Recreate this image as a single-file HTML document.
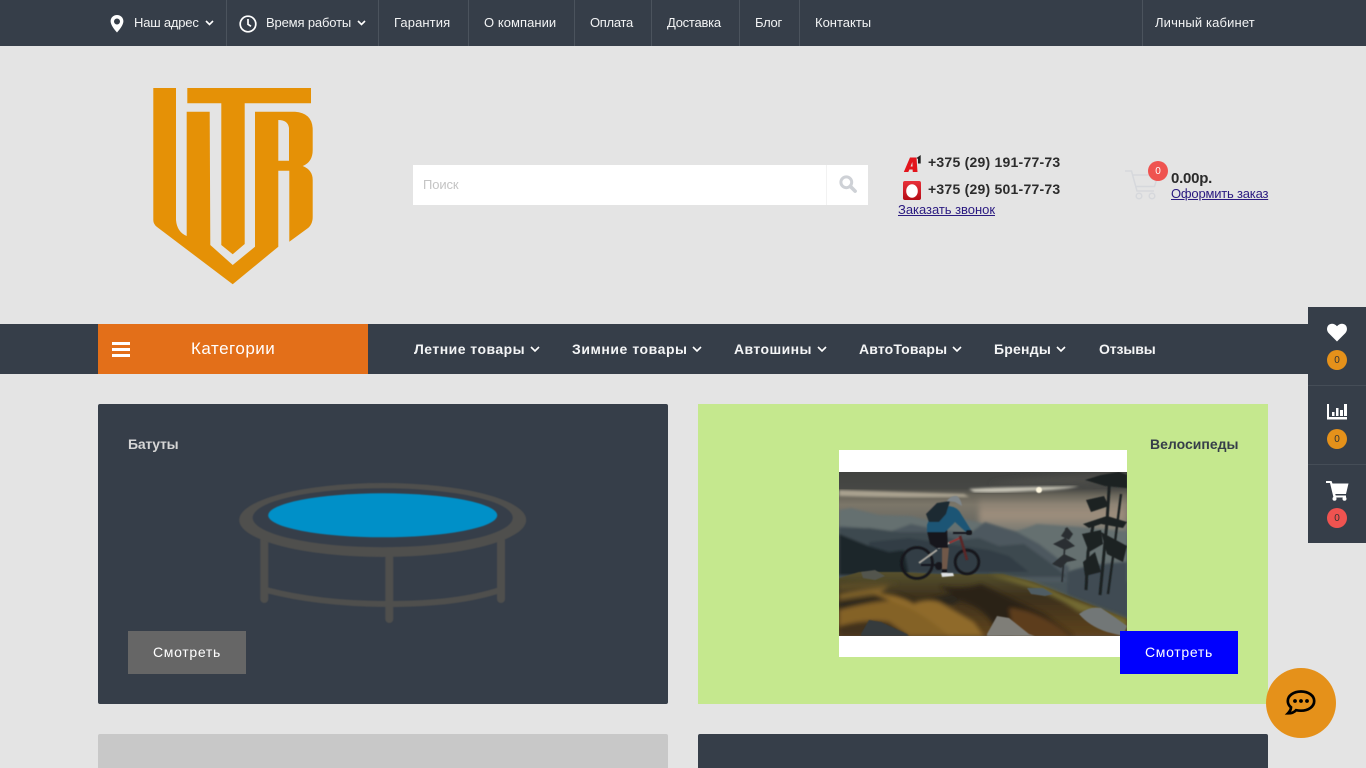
<!DOCTYPE html>
<html lang="ru">
<head>
<meta charset="utf-8">
<title>UTR</title>
<style>
html,body{margin:0;padding:0;width:1366px;height:768px;overflow:hidden;background:#e4e4e4}
body{position:relative;font-family:"Liberation Sans","Noto Sans CJK SC",sans-serif;color:#fff}
.b{position:absolute}
.t{position:absolute;line-height:20px;white-space:nowrap}
.top{font-size:13px;color:#f2f3f4;top:13px}
.sep{position:absolute;top:0;width:1px;height:46px;background:#4b535d}
.menu{font-size:14px;font-weight:700;top:339px;color:#f4f5f6}
svg{position:absolute;overflow:visible}
.chev{fill:none;stroke:currentColor;stroke-width:1.6}
.badge{position:absolute;width:20px;height:20px;border-radius:50%;font-size:10px;line-height:22px;text-align:center;color:#333}
a{color:#2a1a80;text-decoration:underline}
</style>
</head>
<body>
<!-- top bar -->
<div class="b" style="left:0;top:0;width:1366px;height:46px;background:#363e49"></div>
<div class="sep" style="left:226px"></div><div class="sep" style="left:378px"></div><div class="sep" style="left:468px"></div><div class="sep" style="left:574px"></div><div class="sep" style="left:651px"></div><div class="sep" style="left:739px"></div><div class="sep" style="left:799px"></div><div class="sep" style="left:1142px"></div>
<svg style="left:110px;top:15px" width="14" height="18" viewBox="0 0 14 18"><path fill="#fff" fill-rule="evenodd" d="M7 0C3.200 0 .6 2.800.6 6.300.6 10 4.600 14.800 7 17.500 9.400 14.800 13.400 10 13.400 6.300 13.400 2.800 10.800 0 7 0ZM7 3.500A3 3 0 1 1 7 9.500 3 3 0 0 1 7 3.500Z"/></svg>
<span class="t top" style="left:134px;letter-spacing:-.2px">Наш адрес</span>
<svg style="left:205px;top:20px;color:#fff" width="9" height="6"><path class="chev" d="M1 1l3.500 3.500L8 1"/></svg>
<svg style="left:239px;top:15px" width="18" height="18" viewBox="0 0 18 18"><circle cx="9" cy="9" r="7.800" fill="none" stroke="#fff" stroke-width="1.700"/><path d="M9 4v5.300l3 2" fill="none" stroke="#fff" stroke-width="1.700"/></svg>
<span class="t top" style="left:266px;letter-spacing:-.15px">Время работы</span>
<svg style="left:357px;top:20px;color:#fff" width="9" height="6"><path class="chev" d="M1 1l3.500 3.500L8 1"/></svg>
<span class="t top" style="left:394px;letter-spacing:.1px">Гарантия</span>
<span class="t top" style="left:484px;letter-spacing:.05px">О компании</span>
<span class="t top" style="left:590px;letter-spacing:-.3px">Оплата</span>
<span class="t top" style="left:667px;letter-spacing:-.25px">Доставка</span>
<span class="t top" style="left:755px;letter-spacing:-.3px">Блог</span>
<span class="t top" style="left:815px">Контакты</span>
<span class="t top" style="left:1155px;letter-spacing:.15px">Личный кабинет</span>

<!-- logo -->
<svg style="left:0;top:0" width="400" height="300" viewBox="0 0 400 300"><path fill="#e59106" fill-rule="evenodd" d="M153.300 88H176V220Q177 232 186.700 236V111.700H209.700L210.300 245 232.700 265 255 246.700V111.700H295Q312.700 113 312.700 130V150Q312.700 162 302.700 166 312.700 170 312.700 180V216.700Q312.700 225 306.700 229L289.300 241.700V170.700H278.300V246.700L232.700 284.300 156.700 226.700Q153.300 224 153.300 220ZM278.300 120V160.700H289V128Q288 120 278.300 120Z"/><path fill="#e59106" d="M187.300 88H311V103.300H244.700V244L232.700 254.300 221.300 245V103.300H187.300Z"/></svg>

<!-- search -->
<div class="b" style="left:413px;top:165px;width:455px;height:40px;background:#fff"></div>
<div class="b" style="left:826px;top:165px;width:1px;height:40px;background:#f2f2f2"></div>
<span class="t" style="left:423px;top:175px;font-size:13px;color:#c4c4c4;letter-spacing:-.1px">Поиск</span>
<svg style="left:839px;top:175px" width="18" height="18" viewBox="0 0 18 18"><circle cx="7.300" cy="7.300" r="5.400" fill="none" stroke="#ced1d6" stroke-width="3"/><path d="M11.300 11.300l4.800 4.800" stroke="#ced1d6" stroke-width="3.600" stroke-linecap="round"/></svg>

<!-- phones -->
<svg style="left:903px;top:154px" width="19" height="19" viewBox="0 0 19 19"><path fill="#e3141c" fill-rule="evenodd" d="M.8 18L7 3.500h6.500L14.500 18H9.800L9.600 15.500H6.400L5.300 18ZM7.600 12.500h2L9.300 8Z"/><path fill="#222" d="M13.500 4L17.700 1V9.500H15V5Z"/></svg>
<span class="t" style="left:928px;top:152px;font-size:14px;font-weight:700;color:#2b2b2b;letter-spacing:.23px">+375 (29) 191-77-73</span>
<svg style="left:903px;top:181px" width="18" height="19" viewBox="0 0 18 19"><defs><linearGradient id="mts" x1="0" y1="0" x2="0" y2="1"><stop offset="0" stop-color="#e8313a"/><stop offset="1" stop-color="#b50c15"/></linearGradient></defs><rect width="18" height="19" rx="2" fill="url(#mts)"/><ellipse cx="9" cy="10" rx="5.800" ry="6.800" fill="#fff"/></svg>
<span class="t" style="left:928px;top:179px;font-size:14px;font-weight:700;color:#2b2b2b;letter-spacing:.23px">+375 (29) 501-77-73</span>
<a class="t" href="#" style="left:898px;top:200px;font-size:13px;letter-spacing:-.03px">Заказать звонок</a>

<!-- header cart -->
<svg style="left:1125px;top:170px" width="34" height="30" viewBox="0 0 34 30"><path d="M0 1H6.500L12 21H29" fill="none" stroke="#d6d8dc" stroke-width="1.500"/><path d="M7.500 5H33L29.500 16.500H11" fill="none" stroke="#d6d8dc" stroke-width="1.500"/><circle cx="14" cy="26" r="2.800" fill="none" stroke="#d6d8dc" stroke-width="1.500"/><circle cx="27" cy="26" r="2.800" fill="none" stroke="#d6d8dc" stroke-width="1.500"/></svg>
<div class="badge" style="left:1148px;top:161px;background:#ef5350;color:#fff">0</div>
<span class="t" style="left:1171px;top:169px;font-size:15px;font-weight:700;color:#2b2b2b;letter-spacing:-.25px">0.00р.</span>
<a class="t" href="#" style="left:1171px;top:184px;font-size:13px;letter-spacing:-.2px">Оформить заказ</a>

<!-- menu bar -->
<div class="b" style="left:0;top:324px;width:1366px;height:50px;background:#363e49"></div>
<div class="b" style="left:98px;top:324px;width:270px;height:50px;background:#e36f19"></div>
<div class="b" style="left:112px;top:342px;width:18px;height:3px;background:#fff"></div>
<div class="b" style="left:112px;top:348px;width:18px;height:3px;background:#fff"></div>
<div class="b" style="left:112px;top:354px;width:18px;height:3px;background:#fff"></div>
<span class="t" style="left:191px;top:339px;font-size:17px;color:#fff;letter-spacing:.5px">Категории</span>
<span class="t menu" style="left:414px;letter-spacing:.47px">Летние товары</span>
<svg style="left:530px;top:346px;color:#fff" width="10" height="7"><path class="chev" d="M1 1l4 4 4-4"/></svg>
<span class="t menu" style="left:572px;letter-spacing:.55px">Зимние товары</span>
<svg style="left:692px;top:346px;color:#fff" width="10" height="7"><path class="chev" d="M1 1l4 4 4-4"/></svg>
<span class="t menu" style="left:734px;letter-spacing:.43px">Автошины</span>
<svg style="left:817px;top:346px;color:#fff" width="10" height="7"><path class="chev" d="M1 1l4 4 4-4"/></svg>
<span class="t menu" style="left:859px;letter-spacing:.15px">АвтоТовары</span>
<svg style="left:952px;top:346px;color:#fff" width="10" height="7"><path class="chev" d="M1 1l4 4 4-4"/></svg>
<span class="t menu" style="left:994px;letter-spacing:.22px">Бренды</span>
<svg style="left:1056px;top:346px;color:#fff" width="10" height="7"><path class="chev" d="M1 1l4 4 4-4"/></svg>
<span class="t menu" style="left:1099px;letter-spacing:-.1px">Отзывы</span>

<!-- cards -->
<div class="b" style="left:98px;top:404px;width:570px;height:300px;background:#363e49;border-radius:2px"></div>
<div class="b" style="left:698px;top:404px;width:570px;height:300px;background:#c5e88e"></div>
<div class="b" style="left:98px;top:734px;width:570px;height:34px;background:#c8c8c8;border-radius:2px 2px 0 0"></div>
<div class="b" style="left:698px;top:734px;width:570px;height:34px;background:#363e49;border-radius:2px 2px 0 0"></div>
<span class="t" style="left:128px;top:434px;font-size:14px;font-weight:700;color:#d6d6d6;letter-spacing:-.25px">Батуты</span>
<span class="t" style="left:1150px;top:434px;font-size:14px;font-weight:700;color:#363e49;letter-spacing:0">Велосипеды</span>

<!-- trampoline -->
<svg style="left:0;top:0;filter:blur(.4px)" width="668" height="640" viewBox="0 0 668 640" fill="none">
<path d="M264.300 540V599M501 540V599M389.300 558V619" stroke="#4f4f4d" stroke-width="8" stroke-linecap="round"/>
<path d="M266 590Q320 604 389 604T500 590" stroke="#4f4f4d" stroke-width="6"/>
<ellipse cx="382.700" cy="520" rx="143.500" ry="37" fill="#4f4f4d"/>
<ellipse cx="382.700" cy="517.700" rx="130" ry="29.500" fill="#363e49"/>
<ellipse cx="382.700" cy="515.300" rx="114.500" ry="22" fill="#0090c8"/>
</svg>
<div class="b" style="left:128px;top:631px;width:118px;height:43px;background:#666;line-height:43px;text-align:center;font-size:14px;letter-spacing:.7px;color:#fff">Смотреть</div>

<!-- bike photo -->
<div class="b" style="left:839px;top:450px;width:288px;height:207px;background:#fff"></div>
<svg style="left:839px;top:472px;overflow:hidden" width="288" height="164" viewBox="0 0 288 164">
<defs>
<linearGradient id="sky" x1="0" y1="0" x2="0" y2="1"><stop offset="0" stop-color="#414240"/><stop offset=".1" stop-color="#464744"/><stop offset=".14" stop-color="#676459"/><stop offset=".2" stop-color="#7c7669"/><stop offset=".28" stop-color="#6f6d64"/><stop offset=".38" stop-color="#5c6568"/><stop offset=".6" stop-color="#475358"/></linearGradient>
<linearGradient id="haze" x1="0" y1="0" x2="0" y2="1"><stop offset="0" stop-color="#a59786" stop-opacity="0"/><stop offset=".5" stop-color="#a08f7d"/><stop offset="1" stop-color="#808279" stop-opacity=".6"/></linearGradient>
<linearGradient id="hl" x1="0" y1="0" x2="0" y2="1"><stop offset="0" stop-color="#56512e"/><stop offset=".4" stop-color="#3d301c"/><stop offset="1" stop-color="#5f4420"/></linearGradient>
<filter id="s1" x="-10%" y="-10%" width="120%" height="120%"><feGaussianBlur stdDeviation="1.200"/></filter>
<filter id="s3" x="-10%" y="-10%" width="120%" height="120%"><feGaussianBlur stdDeviation="2"/></filter>
<filter id="s2" x="-20%" y="-60%" width="140%" height="220%"><feGaussianBlur stdDeviation="3"/></filter>
<filter id="s0" x="-10%" y="-10%" width="120%" height="120%"><feGaussianBlur stdDeviation=".6"/></filter>
</defs>
<rect width="288" height="164" fill="url(#sky)"/>
<!-- sky -->
<path d="M140 24H288V62H140Z" fill="url(#haze)" filter="url(#s2)"/>
<path d="M0 18Q60 20 125 22L130 25Q60 26 0 24Z" fill="#a9a18f" filter="url(#s1)"/>
<path d="M130 17Q180 14 240 14 225 18 190 19 160 21 135 20Z" fill="#c9c6b8" filter="url(#s1)"/>
<path d="M150 12Q220 0 288 4V8Q240 14 150 12Z" fill="#4e4e4a" filter="url(#s2)"/>
<circle cx="200" cy="18" r="3" fill="#fff8e0" filter="url(#s0)"/>
<!-- mountains -->
<g filter="url(#s1)">
<path d="M0 38L12 36 40 43 72 44 88 48 130 48 176 60 198 52 240 55 288 60V110H0Z" fill="#656f70"/>
<path d="M0 54L25 56 50 60 72 52 100 58 130 62 146 50 178 60 200 72 230 95V110H0Z" fill="#4d595e"/>
<path d="M0 56L30 56 60 60 85 60 120 68 140 66 160 74 185 72 210 90 228 105H0Z" fill="#3c484f"/>
<path d="M30 70L70 66 110 72 150 78 170 84 190 100H30Z" fill="#323e45"/>
<path d="M0 62L30 74 50 80 65 78 70 103H0Z" fill="#1e272c"/>
</g>
<path d="M228 100Q250 92 288 90V150L228 123Z" fill="#3f4c52" filter="url(#s1)"/>
<!-- trees -->
<g filter="url(#s0)" fill="#1c2123">
<g fill="none" stroke="#1c2123"><path d="M271 2L268 50 261 123" stroke-width="3"/><path d="M282 22L276 70 269 122" stroke-width="2.400"/><path d="M254 54L249 80 247 118" stroke-width="3"/><path d="M227 56L225 85 223 110" stroke-width="1.600" stroke="#262b2d"/></g>
<path d="M246 8L262 3 280 0 288 3V16L266 14Z"/>
<path d="M247 28L265 24 270 34 252 40Z"/>
<path d="M244 52L268 44 288 50 284 56 262 52 250 56Z"/>
<path d="M243 62L262 58 264 72 250 80Z"/>
<path d="M262 60L288 74 284 90 268 82Z"/>
<path d="M244 90L256 80 262 100 246 104Z"/>
<path d="M228 55L234 62 230 68 222 64Z" fill="#2a2f30"/>
<path d="M214 72L226 66 236 74 226 78Z" fill="#2a2f30"/>
<path d="M213 92L225 82 238 88 228 90 222 96Z" fill="#2a2f30"/>
</g>
<!-- hill -->
<path d="M0 106L20 100 62 100 100 102 144 102 164 102 194 110 227 123 288 147V164H0Z" fill="url(#hl)" filter="url(#s0)"/>
<g filter="url(#s3)">
<path d="M150 102Q190 106 226 124L288 147V158Q270 142 240 140 215 122 180 112Z" fill="#736b30"/>
<path d="M0 112Q40 108 60 112 30 114 0 118Z" fill="#5c4d26"/>
<path d="M0 122Q25 116 50 114L40 122 0 128Z" fill="#7a5f29"/>
<path d="M0 130L60 122 80 130 110 122 130 125 110 134 40 128 0 140Z" fill="#29251a"/>
<path d="M0 138Q30 130 55 128 78 136 100 150L130 164H0Z" fill="#846227"/>
<path d="M30 120Q60 122 75 132 85 126 100 130 115 138 135 150L145 164H110Q90 146 70 136 50 128 30 120Z" fill="#8f6a2b"/>
<path d="M100 114Q125 118 142 112 175 128 205 142L235 164H160Q150 138 125 130Z" fill="#2b2217"/>
<path d="M170 136Q200 138 232 164H175Z" fill="#5d3e1a"/>
<path d="M0 154Q30 146 50 150L70 164H0Z" fill="#43321c"/>
</g>
<!-- rocks -->
<g filter="url(#s0)">
<path d="M148 162L158 144 170 146 190 162 196 164H148Z" fill="#7f7e78"/>
<path d="M240 142Q250 134 262 136 280 148 288 154L284 164 268 160Q250 154 240 142Z" fill="#727777"/>
<path d="M188 116L204 116 214 122 206 124 192 122Z" fill="#505d63"/>
<path d="M22 162L30 148 42 150 68 162 70 164H22Z" fill="#353b3e"/>
<path d="M22 100L36 98 46 104 36 108 24 106Z" fill="#52554d"/>
</g>
<!-- bike -->
<g fill="none" filter="url(#s0)">
<circle cx="78" cy="91" r="15.500" stroke="#15191a" stroke-width="2.800"/>
<circle cx="128" cy="90" r="11.800" stroke="#15191a" stroke-width="2.800"/>
<path d="M80 91L98 78" stroke="#a9a59d" stroke-width="2"/>
<path d="M82 93L102 93" stroke="#15191a" stroke-width="2"/>
<path d="M99 76L121 66" stroke="#b9b5ad" stroke-width="2"/>
<path d="M110 71L121 66" stroke="#8f2f2d" stroke-width="2"/>
<path d="M121 64L128 88" stroke="#5a2525" stroke-width="2.600"/>
<path d="M114 61H132" stroke="#15191a" stroke-width="2"/>
<circle cx="100" cy="94" r="4" fill="#15191a"/>
</g>
<g filter="url(#s0)">
<path d="M103 76H110L108 97H103Z" fill="#6f5849"/>
<path d="M103 97H108V101H103Z" fill="#15181b"/>
<path d="M102 101H114L115 104 103 105Z" fill="#dfe2e4"/>
<path d="M88 59L108 56 109 76 97 76 91 72Z" fill="#15181b"/>
<path d="M88 53Q92 40 108 34 118 34 122 42L132 58 128 61 116 50 110 56 106 60 88 60Z" fill="#1b5575"/>
<path d="M87 42L98 31 111 29 107 42 100 50 90 50Z" fill="#1e2a30"/>
<path d="M108 29Q112 23 118 24 122 27 123 34L116 30Z" fill="#7f868a"/>
<rect x="127" y="58" width="6" height="5" rx="2" fill="#15191a"/>
</g>
</svg>
<div class="b" style="left:1120px;top:631px;width:118px;height:43px;background:#0000fe;line-height:43px;text-align:center;font-size:14px;letter-spacing:.7px;color:#fff">Смотреть</div>

<!-- side panel -->
<div class="b" style="left:1308px;top:307px;width:58px;height:236px;background:#363e49"></div>
<div class="b" style="left:1308px;top:385px;width:58px;height:1px;background:#454d57"></div>
<div class="b" style="left:1308px;top:464px;width:58px;height:1px;background:#454d57"></div>
<svg style="left:1327px;top:323px" width="20" height="19" viewBox="0 0 20 19"><path fill="#fff" d="M10 18.500L1.800 10.200C-.6 7.800-.4 4 1.600 2 3.800 0 7.400.2 10 3.200 12.600.2 16.200 0 18.400 2 20.400 4 20.600 7.800 18.200 10.200Z"/></svg>
<div class="badge" style="left:1327px;top:350px;background:#e5911a">0</div>
<svg style="left:1327px;top:403px" width="20" height="17" viewBox="0 0 20 17"><path fill="#fff" d="M0 1H2V14H20V16.500H0ZM5 9H7.500V13H5ZM9 5H11.500V13H9ZM13 7H16V13H13ZM17 1H20V13H17Z"/></svg>
<div class="badge" style="left:1327px;top:429px;background:#e5911a">0</div>
<svg style="left:1326px;top:480px" width="23" height="21" viewBox="0 0 23 21"><path fill="#fff" d="M0 1H5.500L6.500 3.500H22.500L20 14H9.300L9.700 15.500H20V17.500H7.500L4 3H0Z"/><circle cx="8.500" cy="18.800" r="2" fill="#fff"/><circle cx="18.500" cy="18.800" r="2" fill="#fff"/></svg>
<div class="badge" style="left:1327px;top:508px;background:#ef5350">0</div>

<!-- chat -->
<div class="b" style="left:1266px;top:668px;width:70px;height:70px;border-radius:50%;background:#e5911a"></div>
<svg style="left:1286px;top:690px" width="30" height="26" viewBox="0 0 30 26"><path d="M15 1.500C7.500 1.500 1.800 5.700 1.800 11 1.800 13.500 3 15.700 5 17.300 5 19.500 3.800 21.500 2 23.300 5 23.300 8 22.500 10 20.200 11.500 20.500 13.200 20.700 15 20.700 22.500 20.700 28.200 16.500 28.200 11 28.200 5.700 22.500 1.500 15 1.500Z" fill="none" stroke="#000" stroke-width="2.700"/><circle cx="9" cy="11" r="1.900"/><circle cx="15" cy="11" r="1.900"/><circle cx="21" cy="11" r="1.900"/></svg>
</body>
</html>
